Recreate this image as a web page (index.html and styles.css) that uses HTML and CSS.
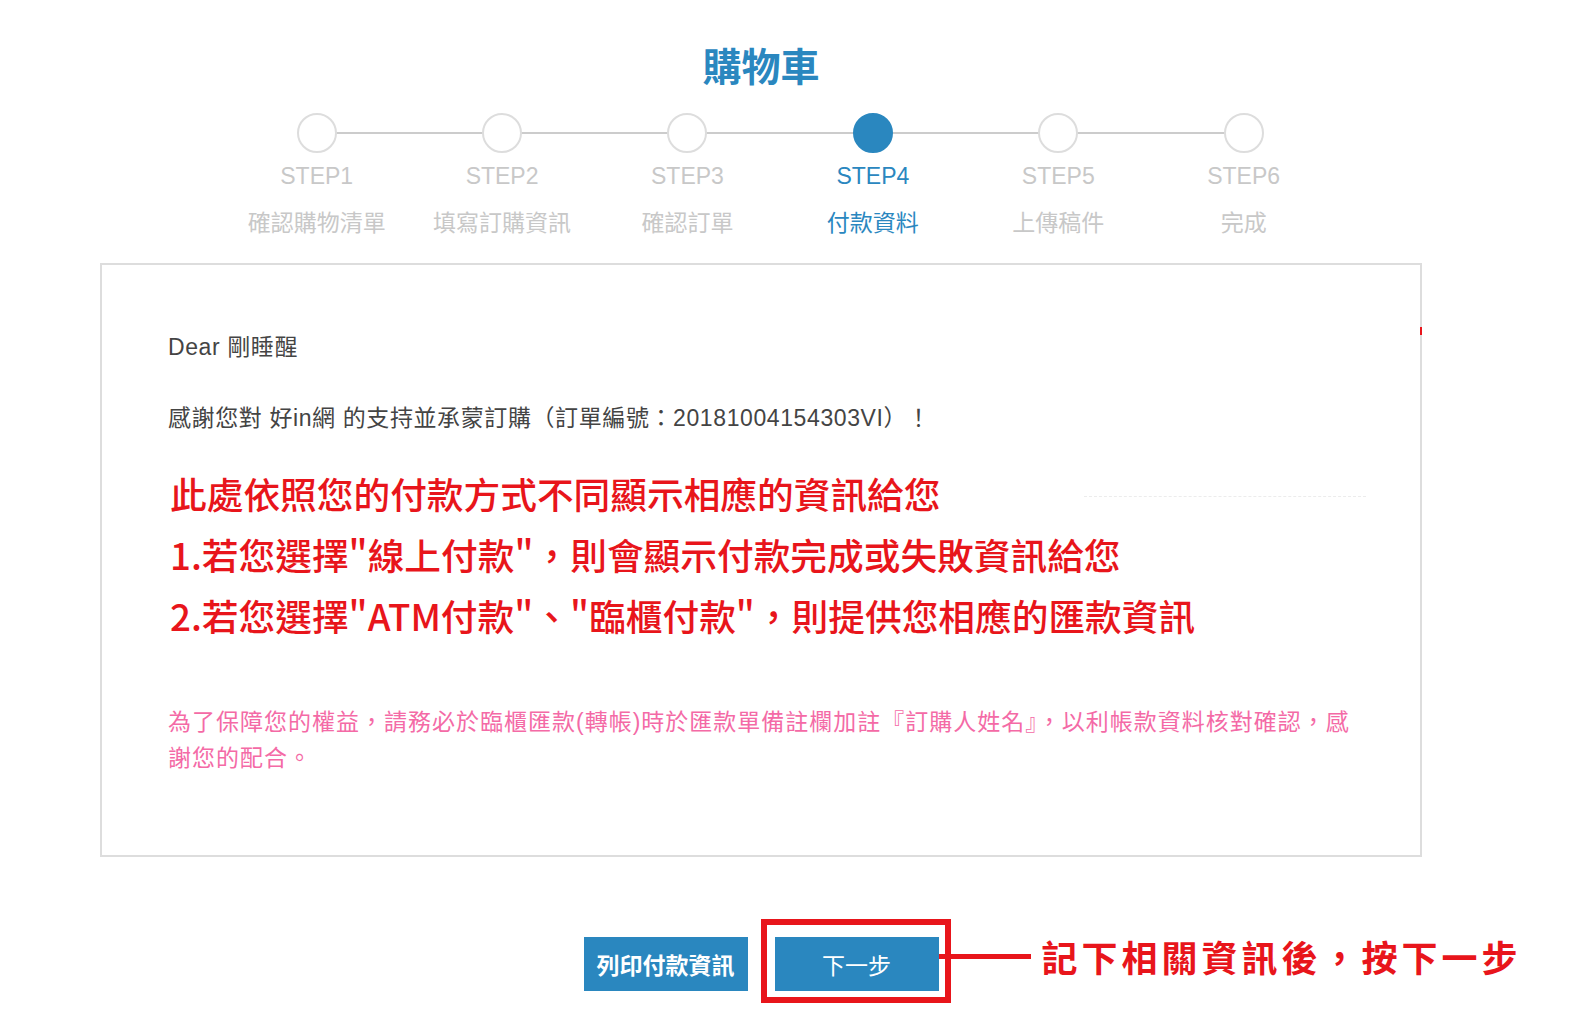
FILE: index.html
```html
<!DOCTYPE html>
<html lang="zh-Hant">
<head>
  <meta charset="UTF-8">
  <meta name="viewport" content="width=device-width, initial-scale=1.0">
  <title>購物車</title>
  <link rel="stylesheet" href="styles.css">
</head>
<body>
  <div class="page">
    <h1 class="title">購物車</h1>

    <ul class="steps">
      <li class="step">
        <span class="dot"></span>
        <span class="step-no">STEP1</span>
        <span class="step-name">確認購物清單</span>
      </li>
      <li class="step">
        <span class="dot"></span>
        <span class="step-no">STEP2</span>
        <span class="step-name">填寫訂購資訊</span>
      </li>
      <li class="step">
        <span class="dot"></span>
        <span class="step-no">STEP3</span>
        <span class="step-name">確認訂單</span>
      </li>
      <li class="step active">
        <span class="dot"></span>
        <span class="step-no">STEP4</span>
        <span class="step-name">付款資料</span>
      </li>
      <li class="step">
        <span class="dot"></span>
        <span class="step-no">STEP5</span>
        <span class="step-name">上傳稿件</span>
      </li>
      <li class="step">
        <span class="dot"></span>
        <span class="step-no">STEP6</span>
        <span class="step-name">完成</span>
      </li>
    </ul>

    <div class="order-box">
      <p class="greet">Dear 剛睡醒</p>
      <p class="thanks">感謝您對 好in網 的支持並承蒙訂購（訂單編號：20181004154303VI）！</p>

      <div class="notice">
        <p class="notice-first">此處依照您的付款方式不同顯示相應的資訊給您<span class="dash"></span></p>
        <p>1.若您選擇"線上付款"，則會顯示付款完成或失敗資訊給您</p>
        <p>2.若您選擇"ATM付款"、"臨櫃付款"，則提供您相應的匯款資訊</p>
      </div>

      <p class="remind">為了保障您的權益，請務必於臨櫃匯款(轉帳)時於匯款單備註欄加註『訂購人姓名』，以利帳款資料核對確認，感謝您的配合。</p>
    </div>

    <div class="actions">
      <button class="btn btn-print">列印付款資訊</button>
      <div class="next-frame">
        <button class="btn btn-next">下一步</button>
        <div class="callout">
          <span class="callout-line"></span>
          <span class="callout-text">記下相關資訊後，按下一步</span>
        </div>
      </div>
    </div>
  </div>
</body>
</html>
```

FILE: styles.css
```css
html {
  background: #ffffff;
}

body {
  margin: 0;
  font-family: "Liberation Sans", "Noto Sans CJK TC", sans-serif;
  background: #ffffff;
  color: #444444;
}

.page {
  width: 1322px;
  margin-left: 100px;
  padding-top: 43px;
}

.title {
  margin: 0;
  text-align: center;
  font-size: 39px;
  line-height: 50px;
  font-weight: bold;
  color: #2a87bf;
}

.steps {
  list-style: none;
  display: flex;
  margin: 20px 0 0 124px;
  padding: 0;
}

.step {
  position: relative;
  width: 185.4px;
  display: flex;
  flex-direction: column;
  align-items: center;
}

.step + .step::before {
  content: "";
  position: absolute;
  top: 19px;
  left: -50%;
  width: 100%;
  height: 2px;
  background: #cccccc;
}

.dot {
  position: relative;
  z-index: 1;
  width: 40px;
  height: 40px;
  box-sizing: border-box;
  border: 2px solid #dddddd;
  border-radius: 50%;
  background: #ffffff;
}

.step-no {
  margin-top: 8px;
  font-size: 23px;
  line-height: 30px;
  color: #c8c8c8;
}

.step-name {
  margin-top: 17px;
  font-size: 23px;
  line-height: 30px;
  color: #c8c8c8;
}

.step.active .dot {
  background: #2a87bf;
  border-color: #2a87bf;
}

.step.active .step-no,
.step.active .step-name {
  color: #2a87bf;
}

.order-box {
  position: relative;
  margin-top: 25px;
  border: 2px solid #dddddd;
  padding: 67px 66px 79px;
}

.order-box::after {
  content: "";
  position: absolute;
  top: 62px;
  right: -2px;
  width: 2px;
  height: 8px;
  background: #e8151b;
}

.order-box p {
  margin: 0;
}

.greet,
.thanks {
  font-size: 23px;
  line-height: 30px;
  letter-spacing: 0.6px;
  color: #444444;
}

.thanks {
  margin-top: 41px !important;
}

.notice {
  margin-top: 30px;
  padding-left: 2px;
  font-family: "Noto Sans CJK TC", sans-serif;
  font-size: 36.7px;
  line-height: 61px;
  font-weight: 500;
  color: #e8151b;
}

.notice-first {
  display: flex;
  align-items: center;
  white-space: nowrap;
}

.dash {
  flex: none;
  width: 282px;
  margin: 6px 0 0 144px;
  border-top: 1px dashed #ececec;
}

.remind {
  margin-top: 58px !important;
  font-size: 23px;
  line-height: 36px;
  letter-spacing: 1px;
  color: #f46aa6;
}

.actions {
  display: flex;
  justify-content: center;
  align-items: flex-start;
  gap: 27px;
  margin-top: 80px;
  padding-bottom: 30px;
}

.btn {
  display: block;
  width: 164px;
  height: 54px;
  border: none;
  padding: 0;
  background: #2a87bf;
  color: #ffffff;
  font-family: "Liberation Sans", "Noto Sans CJK TC", sans-serif;
  font-size: 23px;
  cursor: pointer;
}

.btn-print {
  font-weight: bold;
}

.next-frame {
  position: relative;
  margin: -18px -12px -12px -14px;
  padding: 12px 6px 6px 8px;
  border: 6px solid #e8151b;
}

.callout {
  position: absolute;
  top: 9px;
  left: 100%;
  display: flex;
  align-items: center;
  white-space: nowrap;
}

.callout-line {
  width: 92px;
  height: 5px;
  margin-left: -6px;
  background: #e8151b;
}

.callout-text {
  margin-left: 11px;
  font-family: "Noto Sans CJK TC", sans-serif;
  font-size: 36px;
  line-height: 44px;
  font-weight: bold;
  letter-spacing: 4px;
  color: #e8151b;
}
```
